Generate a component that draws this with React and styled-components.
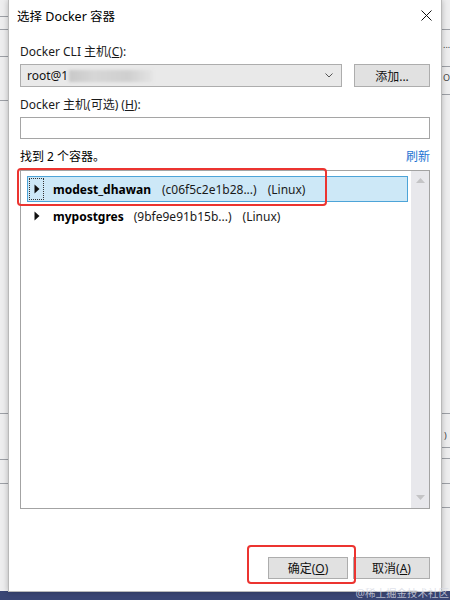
import React from "react";
import styled, { createGlobalStyle } from "styled-components";

const Global = createGlobalStyle`
  html, body { margin: 0; padding: 0; }
  body {
    width: 450px; height: 600px; overflow: hidden;
    font-family: "Noto Sans", "Noto Sans CJK SC", sans-serif;
    font-size: 12px; color: #000;
  }
`;

const Screen = styled.div`
  position: relative;
  width: 450px;
  height: 600px;
  overflow: hidden;
  background: #eeeeef;
  display: flex;
  align-items: flex-start;
  padding-left: 8px;
  box-sizing: border-box;
`;

const Taskbar = styled.div`
  position: absolute;
  left: 0; right: 0; bottom: 0;
  height: 9px;
  background: #3a4674;
`;

const BgLine = styled.div`
  position: absolute;
  left: ${(p) => p.$left}px;
  width: ${(p) => p.$width}px;
  top: ${(p) => p.$top}px;
  height: 1px;
  background: #9da0a6;
`;

const BgGlyph = styled.span`
  position: absolute;
  left: ${(p) => p.$left}px;
  top: ${(p) => p.$top}px;
  font-size: 9px;
  color: #444;
`;

const Dialog = styled.div`
  position: relative;
  z-index: 1;
  width: 434px;
  height: 592px;
  background: #fff;
  border: 1px solid #b9b9b9;
  border-top: none;
  box-sizing: border-box;
  box-shadow: 0 0 6px rgba(0, 0, 0, 0.25);
  display: flex;
  flex-direction: column;
`;

const TitleBar = styled.div`
  height: 30px;
  display: flex;
  align-items: center;
  justify-content: space-between;
  padding: 0 9px 0 8px;
  font-size: 12.5px;
`;

const CloseIcon = styled.svg`
  width: 11px;
  height: 11px;
`;

const Body = styled.div`
  flex: 1;
  display: flex;
  flex-direction: column;
  padding: 0 11px 12px 11px;
`;

const Label = styled.div`
  height: 16px;
  line-height: 16px;
  margin-top: ${(p) => p.$mt}px;
  color: #1a1a1a;
  u { text-decoration: underline; }
`;

const Row = styled.div`
  display: flex;
  align-items: center;
  gap: 12px;
  margin-top: 4px;
`;

const Combo = styled.div`
  flex: 1;
  height: 23px;
  box-sizing: border-box;
  background: #e9e9e9;
  border: 1px solid #adadad;
  display: flex;
  align-items: center;
  padding: 0 6px 0 6px;
  position: relative;
`;

const ComboText = styled.span`
  color: #111;
`;

const Blur = styled.span`
  display: inline-block;
  width: 84px;
  height: 12px;
  margin-left: 1px;
  background: linear-gradient(90deg, #c8c8c8 0%, #d6d6d6 30%, #cfcfcf 70%, #e4e4e4 100%);
  filter: blur(1.5px);
`;

const Chevron = styled.svg`
  margin-left: auto;
  margin-right: 2px;
  width: 8px;
  height: 5px;
`;

const Button = styled.button`
  width: ${(p) => p.$w}px;
  height: ${(p) => p.$h || 23}px;
  box-sizing: border-box;
  background: #e1e1e1;
  border: 1px solid #adadad;
  font: inherit;
  font-size: 12px;
  color: #111;
  padding: 0;
  display: flex;
  align-items: center;
  justify-content: center;
  u { text-decoration: underline; }
`;

const TextInput = styled.div`
  margin-top: 4px;
  height: 22px;
  box-sizing: border-box;
  border: 1px solid #a5a5a5;
  background: #fff;
`;

const FoundRow = styled.div`
  margin-top: 10px;
  height: 16px;
  line-height: 16px;
  display: flex;
  justify-content: space-between;
`;

const Link = styled.span`
  color: #1c74d3;
`;

const ListBox = styled.div`
  position: relative;
  margin-top: 5px;
  height: 339px;
  box-sizing: border-box;
  border: 1px solid #a3a3a3;
  display: flex;
`;

const Items = styled.div`
  flex: 1;
  padding: 5px 3px 0 6px;
  display: flex;
  flex-direction: column;
  gap: 1px;
`;

const Item = styled.div`
  height: 26px;
  box-sizing: border-box;
  display: flex;
  align-items: center;
  border: 1px solid ${(p) => (p.$selected ? "#4da4d8" : "transparent")};
  background: ${(p) => (p.$selected ? "#cde8f7" : "transparent")};
`;

const Expander = styled.div`
  width: 15px;
  height: 22px;
  margin-left: 1px;
  box-sizing: border-box;
  border: 1px dotted ${(p) => (p.$focus ? "#333" : "transparent")};
  display: flex;
  align-items: center;
  justify-content: center;
`;

const Name = styled.span`
  font-weight: 700;
  margin-left: 9px;
`;

const Meta = styled.span`
  margin-left: ${(p) => p.$ml}px;
  color: #1a1a1a;
`;

const Scrollbar = styled.div`
  width: 18px;
  background: #e8e8ec;
  display: flex;
  flex-direction: column;
  justify-content: space-between;
  align-items: center;
  padding: 7px 0 8px;
`;

const Arrow = styled.svg`
  width: 9px;
  height: 5px;
`;

const Footer = styled.div`
  margin-top: auto;
  display: flex;
  justify-content: flex-end;
  gap: 5px;
`;

const Highlight = styled.div`
  position: absolute;
  left: ${(p) => p.$left}px;
  top: ${(p) => p.$top}px;
  width: ${(p) => p.$w}px;
  height: ${(p) => p.$h}px;
  border: 2px solid #ec3430;
  border-radius: 4px;
  box-sizing: border-box;
  z-index: 5;
  pointer-events: none;
`;

const Watermark = styled.div`
  position: absolute;
  right: 1px;
  bottom: 1px;
  z-index: 6;
  font-size: 10.5px;
  line-height: 12px;
  color: rgba(215, 218, 228, 0.8);
`;

const Triangle = () => (
  <svg width="6" height="10" viewBox="0 0 6 10">
    <path d="M0.5 0.5 L5.5 5 L0.5 9.5 Z" fill="#111" />
  </svg>
);

const rows = [
  { name: "modest_dhawan", id: "(c06f5c2e1b28...)", os: "(Linux)", selected: true, m1: 11, m2: 11 },
  { name: "mypostgres", id: "(9bfe9e91b15b...)", os: "(Linux)", selected: false, m1: 10, m2: 11 },
];

const bgLines = [
  { left: 0, width: 8, top: 16 }, { left: 0, width: 8, top: 29 }, { left: 0, width: 8, top: 56 },
  { left: 0, width: 8, top: 100 }, { left: 0, width: 8, top: 413 }, { left: 0, width: 8, top: 459 },
  { left: 0, width: 8, top: 483 },
  { left: 442, width: 8, top: 29 }, { left: 442, width: 8, top: 66 }, { left: 442, width: 8, top: 94 },
  { left: 442, width: 8, top: 413 }, { left: 442, width: 8, top: 447 }, { left: 442, width: 8, top: 458 },
  { left: 442, width: 8, top: 483 }, { left: 442, width: 8, top: 507 },
];

export default function App() {
  return (
    <>
      <Global />
      <Screen>
        {bgLines.map((l, i) => (
          <BgLine key={i} $left={l.left} $width={l.width} $top={l.top} />
        ))}
        <BgGlyph $left={443} $top={38}>...</BgGlyph>
        <BgGlyph $left={443} $top={71}>O</BgGlyph>
        <BgGlyph $left={444} $top={429}>)</BgGlyph>
        <Taskbar />
        <Dialog>
          <TitleBar>
            <span>选择 Docker 容器</span>
            <CloseIcon viewBox="0 0 11 11">
              <path d="M0.5 0.5 L10.5 10.5 M10.5 0.5 L0.5 10.5" stroke="#111" strokeWidth="1" />
            </CloseIcon>
          </TitleBar>
          <Body>
            <Label $mt={14}>
              Docker CLI 主机(<u>C</u>):
            </Label>
            <Row>
              <Combo>
                <ComboText>root@1</ComboText>
                <Blur />
                <Chevron viewBox="0 0 8 5">
                  <path d="M0.5 0.5 L4 4 L7.5 0.5" fill="none" stroke="#555" strokeWidth="1" />
                </Chevron>
              </Combo>
              <Button $w={76}>添加...</Button>
            </Row>
            <Label $mt={10}>
              Docker 主机(可选) (<u>H</u>):
            </Label>
            <TextInput />
            <FoundRow>
              <span>找到 2 个容器。</span>
              <Link>刷新</Link>
            </FoundRow>
            <ListBox>
              <Items>
                {rows.map((r) => (
                  <Item key={r.name} $selected={r.selected}>
                    <Expander $focus={r.selected}>
                      <Triangle />
                    </Expander>
                    <Name>{r.name}</Name>
                    <Meta $ml={r.m1}>{r.id}</Meta>
                    <Meta $ml={r.m2}>{r.os}</Meta>
                  </Item>
                ))}
              </Items>
              <Scrollbar>
                <Arrow viewBox="0 0 9 5">
                  <path d="M0 5 L4.5 0 L9 5 Z" fill="#c4c4c6" />
                </Arrow>
                <Arrow viewBox="0 0 9 5">
                  <path d="M0 0 L4.5 5 L9 0 Z" fill="#c4c4c6" />
                </Arrow>
              </Scrollbar>
            </ListBox>
            <Footer>
              <Button $w={80} $h={22}>
                确定(<u>O</u>)
              </Button>
              <Button $w={77} $h={22}>
                取消(<u>A</u>)
              </Button>
            </Footer>
          </Body>
        </Dialog>
        <Highlight $left={17} $top={168} $w={310} $h={38} />
        <Highlight $left={247} $top={545} $w={109} $h={39} />
        <Watermark>@稀土掘金技术社区</Watermark>
      </Screen>
    </>
  );
}
